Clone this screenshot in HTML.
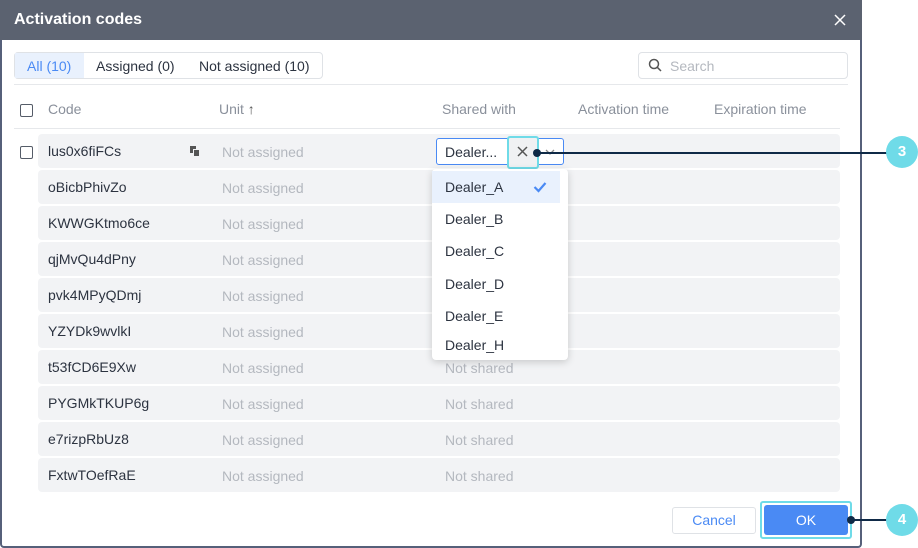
<!DOCTYPE html>
<html><head><meta charset="utf-8"><style>
*{box-sizing:border-box;margin:0;padding:0}
body{width:918px;height:548px;background:#fff;font-family:"Liberation Sans",sans-serif;position:relative;overflow:hidden;color:#2c3340}
.dlg{position:absolute;left:0;top:0;width:862px;height:548px;border:2px solid #56607a;border-top:none;border-radius:0 0 4px 4px;background:#fff}
.hdr{position:absolute;left:0;top:0;width:862px;height:40px;background:#5b6270;color:#fff;font-size:16px;font-weight:bold;padding:11px 14px}
.a{position:absolute;white-space:nowrap}
.row{position:absolute;left:38px;width:802px;height:34px;background:#f2f3f5;border-radius:4px}
.code{position:absolute;left:48px;font-size:14px;color:#2c3340}
.na{position:absolute;left:222px;font-size:14px;color:#b4b8bf}
.ns{position:absolute;left:445px;font-size:14px;color:#b4b8bf}
.th{font-size:14px;color:#8a909b}
.cb{position:absolute;width:13px;height:13px;border:1.5px solid #555c68;border-radius:2px;background:#fff}
.item{position:absolute;left:445px;font-size:14px;color:#2c3340}
</style></head><body>
<div class="dlg"></div>
<div class="hdr">Activation codes</div>
<svg class="a" style="left:834px;top:14px" width="12" height="12"><path d="M1 1L11 11M11 1L1 11" stroke="#fff" stroke-width="1.5"/></svg>

<div class="a" style="left:14px;top:52px;width:309px;height:27px;border:1px solid #dfe2e6;border-radius:4px"></div>
<div class="a" style="left:15px;top:53px;width:69px;height:25px;background:#e9f1fd"></div>
<div class="a" style="left:27px;top:58px;font-size:14px;color:#4a8af4">All (10)</div>
<div class="a" style="left:96px;top:58px;font-size:14px">Assigned (0)</div>
<div class="a" style="left:199px;top:58px;font-size:14px">Not assigned (10)</div>
<div class="a" style="left:638px;top:52px;width:210px;height:27px;border:1px solid #dfe2e6;border-radius:4px"></div>
<svg class="a" style="left:648px;top:58px" width="14" height="14"><circle cx="6" cy="6" r="4.5" fill="none" stroke="#555" stroke-width="1.5"/><path d="M9.3 9.3L13 13" stroke="#555" stroke-width="1.5"/></svg>
<div class="a" style="left:670px;top:58px;font-size:14px;color:#b4b8bf">Search</div>
<div class="a" style="left:14px;top:84px;width:834px;height:1px;background:#e6e8eb"></div>

<div class="cb" style="left:20px;top:104px"></div>
<div class="a th" style="left:48px;top:101px">Code</div>
<div class="a th" style="left:219px;top:101px">Unit <span style="color:#555;font-weight:bold">↑</span></div>
<div class="a th" style="left:442px;top:101px">Shared with</div>
<div class="a th" style="left:578px;top:101px">Activation time</div>
<div class="a th" style="left:714px;top:101px">Expiration time</div>
<div class="a" style="left:14px;top:128px;width:826px;height:1px;background:#e6e8eb"></div>

<div class="row" style="top:134px"></div><div class="row" style="top:170px"></div><div class="row" style="top:206px"></div><div class="row" style="top:242px"></div><div class="row" style="top:278px"></div><div class="row" style="top:314px"></div><div class="row" style="top:350px"></div><div class="row" style="top:386px"></div><div class="row" style="top:422px"></div><div class="row" style="top:458px"></div>
<div class="cb" style="left:20px;top:146px"></div>
<div class="code a" style="top:143px">lus0x6fiFCs</div>
<div class="a" style="left:190px;top:146px;width:6px;height:7px;background:#555"></div><div class="a" style="left:193px;top:149px;width:7px;height:8px;background:#555;border:1px solid #f2f3f5"></div>
<div class="code a" style="top:179px">oBicbPhivZo</div>
<div class="code a" style="top:215px">KWWGKtmo6ce</div>
<div class="code a" style="top:251px">qjMvQu4dPny</div>
<div class="code a" style="top:287px">pvk4MPyQDmj</div>
<div class="code a" style="top:323px">YZYDk9wvlkI</div>
<div class="code a" style="top:359px">t53fCD6E9Xw</div>
<div class="code a" style="top:395px">PYGMkTKUP6g</div>
<div class="code a" style="top:431px">e7rizpRbUz8</div>
<div class="code a" style="top:467px">FxtwTOefRaE</div>
<div class="na a" style="top:144px">Not assigned</div><div class="na a" style="top:180px">Not assigned</div><div class="na a" style="top:216px">Not assigned</div><div class="na a" style="top:252px">Not assigned</div><div class="na a" style="top:288px">Not assigned</div><div class="na a" style="top:324px">Not assigned</div><div class="na a" style="top:360px">Not assigned</div><div class="na a" style="top:396px">Not assigned</div><div class="na a" style="top:432px">Not assigned</div><div class="na a" style="top:468px">Not assigned</div>
<div class="ns a" style="top:360px">Not shared</div><div class="ns a" style="top:396px">Not shared</div><div class="ns a" style="top:432px">Not shared</div><div class="ns a" style="top:468px">Not shared</div>

<div class="a" style="left:436px;top:138px;width:128px;height:27px;border:1px solid #4a8af4;border-radius:3px;background:#fff"></div>
<div class="a" style="left:445px;top:144px;font-size:14px">Dealer...</div>
<svg class="a" style="left:544px;top:148px" width="12" height="8"><path d="M2 2L6 6L10 2" fill="none" stroke="#888" stroke-width="1.3"/></svg>
<div class="a" style="left:507px;top:136px;width:32px;height:33px;border:2px solid #6fdbe8;border-radius:3px;background:#f0f1f3"></div>
<svg class="a" style="left:517px;top:146px" width="11" height="11"><path d="M1 1L10 10M10 1L1 10" stroke="#555" stroke-width="1.5"/></svg>

<div class="a" style="left:432px;top:169px;width:136px;height:191px;background:#fff;border-radius:4px;box-shadow:0 2px 8px rgba(0,0,0,.18)"></div>
<div class="a" style="left:432px;top:171px;width:128px;height:32px;background:#e9f1fd"></div>
<div class="item a" style="top:179px">Dealer_A</div>
<svg class="a" style="left:533px;top:181px" width="14" height="12"><path d="M1.5 6L5.5 10L12.5 2" fill="none" stroke="#4a8af4" stroke-width="2.2"/></svg>
<div class="item a" style="top:211px">Dealer_B</div>
<div class="item a" style="top:243px">Dealer_C</div>
<div class="item a" style="top:276px">Dealer_D</div>
<div class="item a" style="top:308px">Dealer_E</div>
<div class="item a" style="top:337px">Dealer_H</div>

<div class="a" style="left:536px;top:152px;width:351px;height:2px;background:#0f2a47"></div>
<div class="a" style="left:533px;top:149px;width:8px;height:8px;border-radius:50%;background:#0f2a47"></div>
<div class="a" style="left:886px;top:136px;width:32px;height:32px;border-radius:50%;background:#6fdbe8;color:#fff;font-weight:bold;font-size:15px;text-align:center;line-height:32px">3</div>

<div class="a" style="left:672px;top:507px;width:84px;height:27px;border:1px solid #dfe2e6;border-radius:3px;color:#4a8af4;font-size:14px;text-align:center;line-height:25px">Cancel</div>
<div class="a" style="left:760px;top:501px;width:92px;height:38px;border:2px solid #6fdbe8;border-radius:3px"></div>
<div class="a" style="left:764px;top:505px;width:84px;height:30px;background:#4a8af4;border-radius:3px;color:#fff;font-size:14px;text-align:center;line-height:30px">OK</div>
<div class="a" style="left:850px;top:519px;width:38px;height:2px;background:#0f2a47"></div>
<div class="a" style="left:847px;top:516px;width:8px;height:8px;border-radius:50%;background:#0f2a47"></div>
<div class="a" style="left:886px;top:504px;width:32px;height:32px;border-radius:50%;background:#6fdbe8;color:#fff;font-weight:bold;font-size:15px;text-align:center;line-height:32px">4</div>
</body></html>
